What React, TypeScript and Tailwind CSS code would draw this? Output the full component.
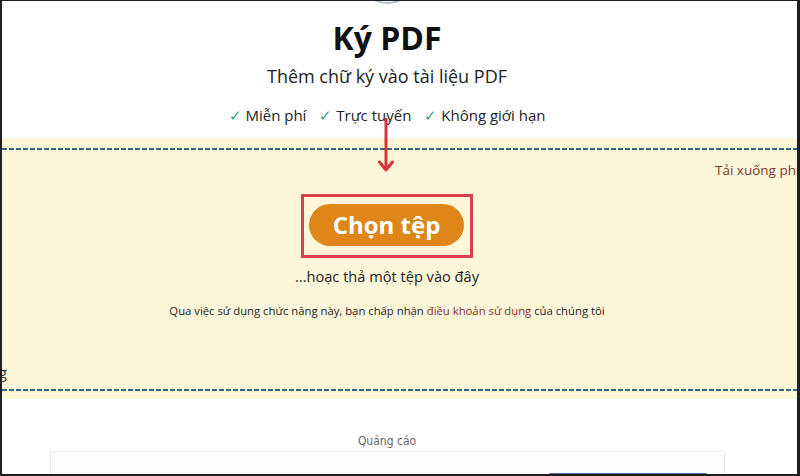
import React from "react";

export default function App() {
  const font = { fontFamily: '"Open Sans", "Noto Sans", sans-serif' };
  return (
    <div className="w-[800px] h-[476px] bg-[#1e1e1e] pt-[1px] pl-[2px] pr-[3px] pb-[2px]" style={font}>
      <div className="relative flex h-[473px] w-[795px] flex-col overflow-hidden bg-white">
        {/* header */}
        <div className="flex flex-col items-center pr-[25px]">
          <div className="flex h-[3px] w-full justify-center overflow-hidden">
            <div className="-mt-[58px] h-[61px] w-[61px] shrink-0 rounded-full border-2 border-[#a8bdd0]" />
          </div>
          <h1 className="mt-[14px] text-[32px] leading-[40px] font-bold text-[#111]">Ký PDF</h1>
          <p className="mt-[6px] text-[18px] leading-[24px] text-[#222]">Thêm chữ ký vào tài liệu PDF</p>
          <div className="mt-[15px] flex items-center gap-[13px] text-[15px] leading-[24px] text-[#222]">
            <span><span className="text-[#3c9c80]">✓</span> Miễn phí</span>
            <span><span className="text-[#3c9c80]">✓</span> Trực tuyến</span>
            <span><span className="text-[#3c9c80]">✓</span> Không giới hạn</span>
          </div>
        </div>

        {/* drop zone band */}
        <div className="relative mt-[11px] bg-[#fdf6d9] pt-[10px] pb-[8px]">
          <div className="h-[2px] w-full bg-[repeating-linear-gradient(90deg,#2f6a86_0_5px,transparent_5px_7px)]" />
          <div className="flex flex-col items-center pr-[25px]">
            <div className="mt-[44px] border-[3px] border-[#d9414a] pt-[7px] pr-[6px] pb-[9px] pl-[5px]">
              <button className="flex h-[42px] w-[155px] items-center justify-center rounded-full bg-[#df8619] text-[24px] font-bold text-white">
                Chọn tệp
              </button>
            </div>
            <p className="mt-[7px] text-[14.6px] leading-[22px] text-[#222]">...hoạc thả một tệp vào đây</p>
            <p className="mt-[15px] mb-[69px] text-[11.3px] leading-[18px] text-[#222]">
              Qua việc sử dụng chức năng này, bạn chấp nhận{" "}
              <span className="text-[#8a2d1c]">điều khoản sử dụng</span> của chúng tôi
            </p>
          </div>
          <div className="h-[2px] w-full bg-[repeating-linear-gradient(90deg,#2f6a86_0_5px,transparent_5px_7px)]" />

          <span className="absolute left-[713px] top-[22px] whitespace-nowrap text-[13.5px] leading-[20px] text-[#7b3b2b]">
            Tải xuống phiên bản máy tính
          </span>
          <span className="absolute right-[calc(100%-5px)] top-[224px] whitespace-nowrap text-[15px] leading-[20px] text-[#333]">
            Đang
          </span>
        </div>
        <div className="h-[4px] bg-gradient-to-b from-[#fdf6d9] to-white" />

        {/* ad */}
        <div className="flex flex-col items-center pr-[25px]">
          <p className="mt-[36px] text-[12px] leading-[12px] text-[#666]" style={{ fontFamily: '"DejaVu Sans Condensed", "DejaVu Sans", sans-serif' }}>
            Quảng cáo
          </p>
          <div className="mt-[4px] h-[60px] w-[675px] border border-[#ececec] bg-[#fdfdfd] pt-[21px] pl-[497px]">
            <div className="h-[30px] w-[160px] rounded-t-[3px] bg-[#4b6ea8]" />
          </div>
        </div>

        {/* annotation arrow */}
        <svg className="absolute left-[376px] top-[117px]" width="16" height="56" viewBox="0 0 16 56" fill="none">
          <path d="M8 0 V52" stroke="#d8343b" strokeWidth="3" />
          <path d="M1.5 44 L8 52 L14.5 44" stroke="#d8343b" strokeWidth="3" strokeLinecap="round" strokeLinejoin="round" />
        </svg>
      </div>
    </div>
  );
}
